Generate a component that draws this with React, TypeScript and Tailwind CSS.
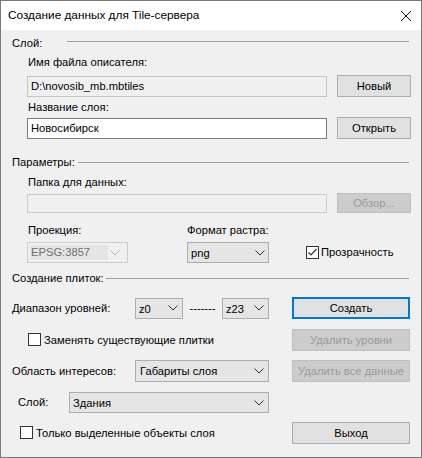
import React from "react";

const FONT = { fontFamily: '"Liberation Sans", Arial, sans-serif' };

function Chevron({ color = "#333" }: { color?: string }) {
  return (
    <svg width="10" height="6" viewBox="0 0 10 6" className="shrink-0">
      <polyline points="0.5,0.5 5,5 9.5,0.5" fill="none" stroke={color} strokeWidth="1" />
    </svg>
  );
}

function Btn({ children, disabled, primary }: { children: React.ReactNode; disabled?: boolean; primary?: boolean }) {
  if (primary)
    return (
      <div className="w-[118px] h-[22px] border-2 border-[#0078d7] bg-[#e1e1e1] flex items-center justify-center text-black">
        {children}
      </div>
    );
  if (disabled)
    return (
      <div className="w-[118px] h-[22px] border border-[#bfbfbf] bg-[#cccccc] flex items-center justify-center text-[#9a9a9a] whitespace-nowrap">
        {children}
      </div>
    );
  return (
    <div className="w-[118px] h-[22px] border border-[#adadad] bg-[#e1e1e1] flex items-center justify-center text-black">
      {children}
    </div>
  );
}

function Check({ checked }: { checked?: boolean }) {
  return (
    <div className="w-[13px] h-[13px] border border-[#333333] bg-white shrink-0 flex items-center justify-center">
      {checked && (
        <svg width="11" height="11" viewBox="0 0 11 11">
          <polyline points="1.5,5.5 4,8 9.5,2" fill="none" stroke="#333" strokeWidth="1.2" />
        </svg>
      )}
    </div>
  );
}

function GroupHeader({ label, gap }: { label: string; gap: string }) {
  return (
    <div className="flex items-center h-[14px] pl-[11px] pr-[12px]">
      <span className="leading-[14px] whitespace-nowrap">{label}</span>
      <div className={`flex-1 h-px bg-[#a0a0a0] ${gap}`} />
    </div>
  );
}

export default function App() {
  return (
    <div
      className="w-[422px] h-[458px] border border-[#7a7a7a] bg-[#f0f0f0] text-[11.2px] text-black flex flex-col overflow-hidden"
      style={FONT}
    >
      {/* Title bar */}
      <div className="h-[29px] bg-white flex items-center justify-between pl-[7px] pr-[9px] shrink-0">
        <span className="text-[11.8px]">Создание данных для Tile-сервера</span>
        <svg width="12" height="12" viewBox="0 0 12 12">
          <path d="M1 1 L11 11 M11 1 L1 11" stroke="#111" strokeWidth="1" fill="none" />
        </svg>
      </div>

      {/* Слой group */}
      <div className="mt-[6px]">
        <div className="flex items-center h-[14px] pl-[11px] pr-[12px]">
          <span className="leading-[14px] whitespace-nowrap">Слой:</span>
          <div className="flex-1 h-px bg-[#a0a0a0] ml-[25px] -mt-[3px]" />
        </div>
      </div>
      <div className="mt-[5px] pl-[27px] h-[14px] leading-[14px]">Имя файла описателя:</div>
      <div className="mt-[6px] flex items-center h-[22px] pl-[26px]">
        <div className="w-[300px] h-[21px] border border-[#c4c4c4] bg-[#f0f0f0] flex items-center pl-[3px]">
          D:\novosib_mb.mbtiles
        </div>
        <div className="ml-[10px]">
          <div className="w-[74px] h-[22px] border border-[#adadad] bg-[#e1e1e1] flex items-center justify-center">Новый</div>
        </div>
      </div>
      <div className="mt-[3px] pl-[27px] h-[14px] leading-[14px]">Название слоя:</div>
      <div className="mt-[3px] flex items-center h-[22px] pl-[26px]">
        <div className="w-[300px] h-[21px] border border-[#7a7a7a] bg-white flex items-center pl-[3px]">Новосибирск</div>
        <div className="ml-[10px]">
          <div className="w-[74px] h-[22px] border border-[#adadad] bg-[#e1e1e1] flex items-center justify-center">Открыть</div>
        </div>
      </div>

      {/* Параметры */}
      <div className="mt-[16px]">
        <GroupHeader label="Параметры:" gap="ml-[3px]" />
      </div>
      <div className="mt-[6px] pl-[27px] h-[14px] leading-[14px]">Папка для данных:</div>
      <div className="mt-[4px] flex items-center h-[20px] pl-[26px]">
        <div className="w-[300px] h-[19px] border border-[#cccccc] bg-[#f0f0f0]" />
        <div className="ml-[10px]">
          <div className="w-[74px] h-[20px] border border-[#bfbfbf] bg-[#cccccc] flex items-center justify-center text-[#9a9a9a]">
            Обзор...
          </div>
        </div>
      </div>
      <div className="mt-[10px] flex h-[14px] leading-[14px]">
        <div className="pl-[27px] w-[186px]">Проекция:</div>
        <div>Формат растра:</div>
      </div>
      <div className="mt-[5px] flex items-center h-[21px]">
        <div className="ml-[26px] w-[101px] h-[21px] border border-[#cccccc] bg-[#f0f0f0] flex items-center pl-[2px] pr-[7px]">
          <div className="w-[78px] h-[15px] bg-[#e5e5e5] flex items-center pl-[1px] text-[#6d6d6d]">EPSG:3857</div>
          <div className="flex-1" />
          <Chevron color="#b5b5b5" />
        </div>
        <div className="ml-[59px] w-[82px] h-[21px] border border-[#adadad] bg-[#e5e5e5] flex items-center pl-[3px] pr-[3px]">
          <span className="flex-1 pt-[2px]">png</span>
          <Chevron />
        </div>
        <div className="ml-[37px] flex items-center">
          <Check checked />
          <span className="ml-[2px]">Прозрачность</span>
        </div>
      </div>

      {/* Создание плиток */}
      <div className="mt-[8px]">
        <GroupHeader label="Создание плиток:" gap="ml-[2px]" />
      </div>
      <div className="mt-[12px] flex items-center h-[22px]">
        <div className="ml-[11px] w-[123px]">Диапазон уровней:</div>
        <div className="w-[48px] h-[21px] border border-[#adadad] bg-[#e5e5e5] flex items-center pl-[3px] pr-[4px]">
          <span className="flex-1 pt-[2px]">z0</span>
          <Chevron />
        </div>
        <div className="w-[39px] text-center">-------</div>
        <div className="w-[47px] h-[21px] border border-[#adadad] bg-[#e5e5e5] flex items-center pl-[3px] pr-[4px]">
          <span className="flex-1 pt-[2px]">z23</span>
          <Chevron />
        </div>
        <div className="ml-[23px]">
          <Btn primary>Создать</Btn>
        </div>
      </div>
      <div className="mt-[10px] flex items-center h-[22px]">
        <div className="ml-[27px] w-[264px] flex items-center">
          <Check />
          <span className="ml-[3px]">Заменять существующие плитки</span>
        </div>
        <Btn disabled>Удалить уровни</Btn>
      </div>
      <div className="mt-[9px] flex items-center h-[22px]">
        <div className="ml-[11px] w-[123px]">Область интересов:</div>
        <div className="w-[134px] h-[22px] border border-[#adadad] bg-[#e5e5e5] flex items-center pl-[4px] pr-[4px]">
          <span className="flex-1">Габариты слоя</span>
          <Chevron />
        </div>
        <div className="ml-[23px]">
          <Btn disabled>Удалить все данные</Btn>
        </div>
      </div>
      <div className="mt-[10px] flex items-center h-[21px]">
        <div className="ml-[17px] w-[51px]">Слой:</div>
        <div className="w-[200px] h-[21px] border border-[#adadad] bg-[#e5e5e5] flex items-center pl-[3px] pr-[4px]">
          <span className="flex-1 pt-[2px]">Здания</span>
          <Chevron />
        </div>
      </div>
      <div className="mt-[9px] flex items-center h-[22px]">
        <div className="ml-[19px] w-[272px] flex items-center">
          <Check />
          <span className="ml-[3px]">Только выделенные объекты слоя</span>
        </div>
        <Btn>Выход</Btn>
      </div>
    </div>
  );
}
